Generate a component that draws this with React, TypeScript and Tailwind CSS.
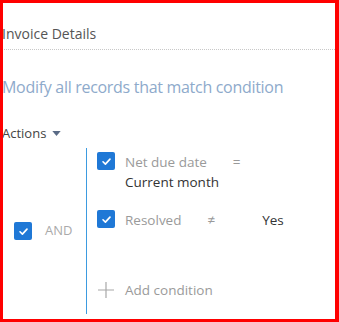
function Check() {
  return (
    <span className="flex size-[18px] shrink-0 items-center justify-center rounded-[2px] bg-[#1f78d6]">
      <svg viewBox="0 0 12 12" className="size-[11px]" aria-hidden="true">
        <path d="M2.2 6.3 4.8 8.8 9.8 3.4" fill="none" stroke="#fff" strokeWidth="1.8" strokeLinecap="round" strokeLinejoin="round" />
      </svg>
    </span>
  );
}

export default function App() {
  return (
    <div className="h-[322px] w-[339px] overflow-hidden border-[3px] border-r-[4px] border-[#ff0000] bg-white font-['Open_Sans',sans-serif]">
      <div className="-ml-[1px]">
        <div className="flex h-[46px] items-end pb-[5px] text-[14px] text-[#555]">Invoice Details</div>
        <div className="border-b border-dotted border-[#c8c8c8]" />

        <div className="mt-[26px] text-[16px] leading-[22px] tracking-[-0.3px] text-[#8eaacb]">
          Modify all records that match condition
        </div>

        <div className="mt-[26px] flex items-center gap-[6px] text-[13px] leading-[18px] text-[#444]">
          Actions
          <svg viewBox="0 0 10 6" className="h-[5px] w-[9px]" aria-hidden="true">
            <path d="M0 0h10L5 6z" fill="#5a6b86" />
          </svg>
        </div>

        <div className="mt-[6px] flex h-[166px]">
          <div className="flex w-[84px] items-center gap-[13px] pl-[12px] text-[13px] text-[#aaa]">
            <Check />
            AND
          </div>
          <div className="flex flex-col border-l-[1.5px] border-[#3d9be0] pl-[10px] pt-[4px]">
            <div className="flex gap-[10px]">
              <Check />
              <div className="text-[13.5px] leading-[20px]">
                <div className="flex">
                  <span className="text-[#9a9a9a]">Net due date</span>
                  <span className="ml-[26px] text-[#9a9a9a]">=</span>
                </div>
                <div className="text-[#333]">Current month</div>
              </div>
            </div>

            <div className="mt-[18px] flex gap-[10px]">
              <Check />
              <div className="flex text-[13.5px] leading-[20px]">
                <span className="text-[#9a9a9a]">Resolved</span>
                <span className="ml-[26px] text-[#9a9a9a]">≠</span>
                <span className="ml-[47px] text-[#333]">Yes</span>
              </div>
            </div>

            <div className="mt-[50px] flex items-center gap-[10px] text-[13.5px] text-[#9a9a9a]">
              <svg viewBox="0 0 18 18" className="size-[18px]" aria-hidden="true">
                <path d="M9 1v16M1 9h16" stroke="#a8a8a8" strokeWidth="1.2" fill="none" />
              </svg>
              Add condition
            </div>
          </div>
        </div>
      </div>
    </div>
  );
}
